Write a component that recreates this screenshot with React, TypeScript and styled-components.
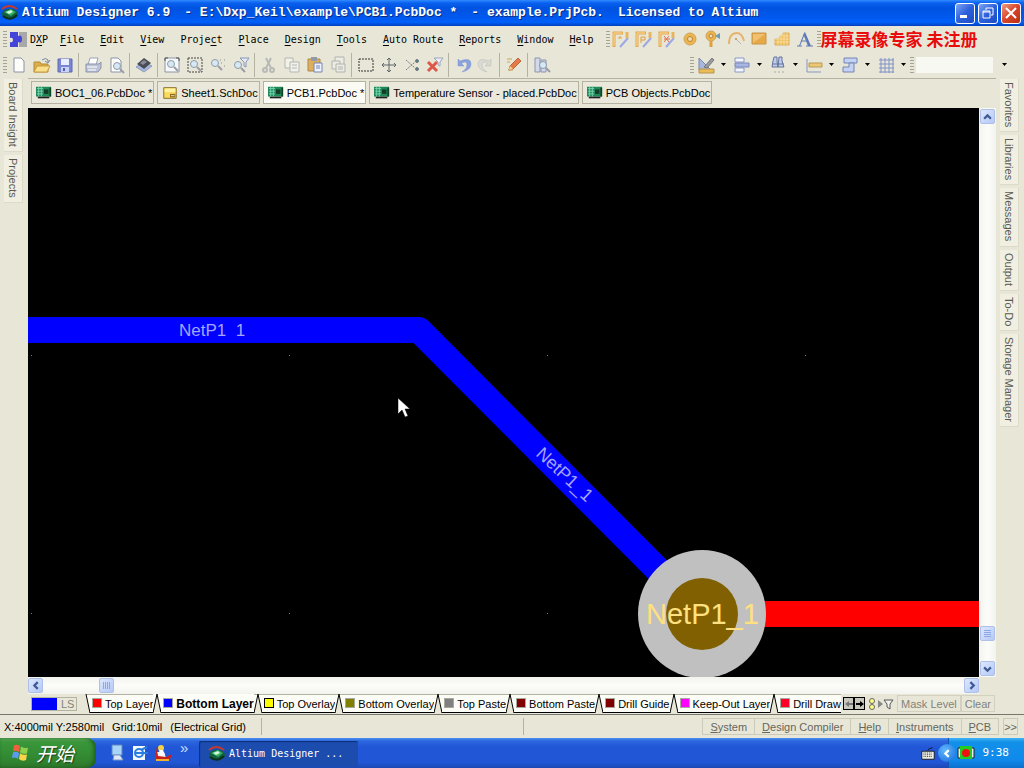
import React from 'react';
import styled, { createGlobalStyle } from 'styled-components';

const FACE = '#e8e7d7';
const EDGE = '#b4b3a2';

const GlobalStyle = createGlobalStyle`
  * { box-sizing: border-box; }
  body { margin: 0; background: ${FACE}; }
  button, select { font: inherit; color: inherit; border: 0; background: none; padding: 0; margin: 0; border-radius: 0; }
  svg { display: block; flex: none; }
`;

const Screen = styled.div`
  display: flex;
  flex-direction: column;
  height: 100vh;
  overflow: hidden;
  background: ${FACE};
  color: #000;
  font-family: 'Liberation Sans', sans-serif;
  font-size: 11px;
  line-height: 14px;
  white-space: nowrap;
`;

/* ---------- title bar ---------- */
const TitleBar = styled.header`
  display: flex;
  align-items: center;
  height: 26px;
  flex: none;
  padding: 0 3px 0 1px;
  background: linear-gradient(#2f8bff 0, #0a60ee 3px, #0053e0 8px, #0059f0 18px, #0062fb 22px, #0040c0 26px);
`;
const TitleText = styled.h1`
  display: flex;
  flex: 1;
  gap: 14px;
  margin: 0 0 0 3px;
  color: #fff;
  font: bold 13px/18px 'Liberation Mono', monospace;
  text-shadow: 1px 1px 0 #0a2a80;
`;
const WindowButtons = styled.div`
  display: flex;
  gap: 3px;
`;
const WindowButton = styled.button<{ $close?: boolean }>`
  display: grid;
  place-items: center;
  width: 20px;
  height: 21px;
  border: 1px solid #fff;
  border-radius: 3px;
  background: ${p => (p.$close ? 'linear-gradient(135deg, #f09a80, #d8452a 50%, #b83015)' : 'linear-gradient(135deg, #7ea5f5, #2c60dc 50%, #1c4cc4)')};
`;

/* ---------- menus and toolbars ---------- */
const BarRow = styled.div`
  display: flex;
  align-items: center;
  height: 26px;
  flex: none;
  padding-left: 3px;
`;
const Grip = styled.span`
  width: 4px;
  height: 16px;
  flex: none;
  background: repeating-linear-gradient(#a5a494 0 1px, transparent 1px 3px);
`;
const MenuNav = styled.nav`
  display: flex;
  align-items: center;
  margin-right: 4px;
  font: 10px/18px 'DejaVu Sans Mono', monospace;
`;
const MenuButton = styled.button`
  padding: 1px 8px 0;
  u { text-underline-offset: 2px; }
`;
const DxpButton = styled(MenuButton)`
  display: flex;
  align-items: center;
  gap: 3px;
  padding: 1px 4px 0 2px;
`;
const ToolGroup = styled.div`
  display: flex;
  align-items: center;
`;
const LeadGroup = styled(ToolGroup)`
  margin-right: 137px;
`;
const ToolButton = styled.button<{ $faded?: boolean }>`
  display: grid;
  place-items: center;
  width: 23px;
  height: 22px;
  opacity: ${p => (p.$faded ? 0.45 : 1)};
`;
const DropButton = styled.button`
  display: flex;
  align-items: center;
  width: 36px;
  height: 22px;
  padding-left: 3px;
  gap: 5px;
`;
const Separator = styled.span`
  width: 1px;
  height: 24px;
  margin: 0 2px;
  background: ${EDGE};
`;
const Combo = styled.label`
  display: flex;
  align-items: center;
  gap: 8px;
  margin-left: 2px;
  select { appearance: none; width: 77px; height: 16px; background: #f8f8f2; }
`;
const Watermark = styled.strong`
  color: #e80c0c;
  font: bold 17px/24px 'Noto Sans CJK SC', sans-serif;
`;

/* ---------- work area ---------- */
const WorkArea = styled.div`
  display: flex;
  flex: 1;
  min-height: 0;
`;
const SideRail = styled.aside`
  display: flex;
  flex-direction: column;
  align-items: flex-start;
  gap: 3px;
  width: 28px;
  flex: none;
  padding: 1px 0 0 4px;
`;
const SideTab = styled.button`
  writing-mode: vertical-rl;
  width: 19px;
  padding: 3px 0 4px;
  color: #59594f;
  text-align: left;
  line-height: 18px;
  background: #f0efe2;
  border-right: 1px solid #dcdbca;
  border-bottom: 1px solid #dcdbca;
`;
const Center = styled.main`
  display: flex;
  flex-direction: column;
  flex: 1;
  min-width: 0;
  border-top: 1px solid ${EDGE};
`;
const DocTabs = styled.div`
  display: flex;
  align-items: center;
  gap: 3px;
  height: 29px;
  flex: none;
  padding: 0 0 2px 3px;
`;
const DocTab = styled.button<{ $active?: boolean }>`
  display: flex;
  align-items: center;
  gap: 3px;
  height: 23px;
  padding: 0 1px 0 4px;
  border: 1px solid ${EDGE};
  background: ${p => (p.$active ? '#fbfbf4' : '#e9e8da')};
`;
const ViewRow = styled.div`
  display: flex;
  flex: 1;
  min-height: 0;
`;
const Board = styled.svg`
  flex: 1;
  min-width: 0;
  width: 100%;
  height: 100%;
  background: #000;
  font-family: 'Liberation Sans', sans-serif;
`;
const VScroll = styled.div`
  display: flex;
  flex-direction: column;
  align-items: center;
  justify-content: space-between;
  width: 17px;
  flex: none;
  padding: 1px 0;
  background: linear-gradient(90deg, #f3f3ee, #fcfcfa 50%, #f3f3ee);
`;
const HScroll = styled.div`
  display: flex;
  align-items: center;
  justify-content: space-between;
  height: 17px;
  flex: none;
  margin-right: 17px;
  background: linear-gradient(#f3f3ee, #fcfcfa 50%, #f3f3ee);
`;
const ScrollButton = styled.button`
  display: grid;
  place-items: center;
  width: 15px;
  height: 15px;
  border: 1px solid #aebfe8;
  border-radius: 2px;
  background: linear-gradient(135deg, #dde7fe, #b5c9f6);
`;
const ScrollEnd = styled.div<{ $row?: boolean; $gap: number }>`
  display: flex;
  flex-direction: ${p => (p.$row ? 'row' : 'column')};
  gap: ${p => p.$gap}px;
`;

/* ---------- layer strip ---------- */
const LayerBar = styled.div`
  display: flex;
  height: 20px;
  flex: none;
  padding: 0 1px 0 3px;
`;
const LayerSet = styled.button`
  display: flex;
  width: 46px;
  height: 14px;
  margin: 3px 5px 0 0;
  border: 1px solid ${EDGE};
  color: #85847a;
  line-height: 13px;
`;
const LayerColor = styled.span`
  width: 25px;
  height: 12px;
  margin-right: 4px;
  background: #00f;
`;
const LayerTabs = styled.div`
  display: flex;
  flex: 1;
  min-width: 0;
  overflow: hidden;
`;
const LayerTab = styled.button<{ $active?: boolean }>`
  display: flex;
  align-items: center;
  flex: none;
  height: 19px;
  background: #fdfdf8;
  border-top: 1px solid ${p => (p.$active ? '#fdfdf8' : EDGE)};
  border-bottom: 1px solid #000;
  font-size: ${p => (p.$active ? '12px' : '11px')};
  font-weight: ${p => (p.$active ? 'bold' : 'normal')};
`;
const Swatch = styled.span<{ $color: string; $outlined?: boolean }>`
  width: 10px;
  height: 10px;
  margin: 0 3px 2px 2px;
  background: ${p => p.$color};
  border: 1px solid ${p => (p.$outlined ? '#000' : '#a8a89c')};
`;
const Stepper = styled.button`
  display: grid;
  place-items: center;
  width: 11px;
  height: 13px;
  margin-top: 3px;
  border: 1px solid #000;
  background: #c9c8bc;
`;
const LayerTools = styled.div`
  display: flex;
  align-items: center;
  height: 17px;
  margin: 1px 0 0 3px;
  color: #83827a;
`;
const FlatButton = styled.button`
  height: 17px;
  padding: 0 3px;
  border: 1px solid #d2d1c0;
`;

/* ---------- status bar ---------- */
const StatusBar = styled.footer`
  display: flex;
  align-items: center;
  height: 24px;
  flex: none;
  padding: 0 6px 0 4px;
  border-top: 1px solid #77776c;
`;
const Coordinates = styled.div`
  display: flex;
  align-items: center;
  gap: 8px;
  width: 258px;
  height: 17px;
  border-right: 1px solid ${EDGE};
`;
const Message = styled.div`
  width: 262px;
  height: 17px;
  border-right: 1px solid ${EDGE};
`;
const PanelButtons = styled.div`
  display: flex;
  margin-left: auto;
  color: #66665c;
`;
const PanelButton = styled.button`
  height: 17px;
  padding: 0 7px;
  border: 1px solid #cccbb9;
  border-left-width: 0;
  &:first-child { border-left-width: 1px; }
`;
const MoreButton = styled.button`
  height: 17px;
  margin-left: 4px;
  border: 1px solid #cccbb9;
`;

/* ---------- task bar ---------- */
const TaskBar = styled.div`
  display: flex;
  height: 30px;
  flex: none;
  color: #fff;
  background: linear-gradient(#4a90f0 0, #2c66dd 3px, #2157d7 9px, #2157d7 24px, #1c48b4 30px);
`;
const StartButton = styled.button`
  display: flex;
  align-items: center;
  gap: 7px;
  width: 96px;
  padding-left: 11px;
  border-radius: 0 9px 9px 0;
  background: linear-gradient(#6dbb6a 0, #3a973a 4px, #338a33 18px, #2f7a2d 30px);
  box-shadow: inset -2px 0 4px #1c5a1c;
  font: italic 19px/26px 'Noto Sans CJK SC', sans-serif;
  text-shadow: 1px 1px 1px #1a401a;
`;
const QuickLaunch = styled.div`
  display: flex;
  align-items: center;
  gap: 5px;
  width: 103px;
  padding-left: 12px;
`;
const QuickButton = styled.button`
  width: 18px;
  height: 18px;
`;
const Chevron = styled.span`
  align-self: flex-start;
  margin-left: 3px;
  font-size: 15px;
  line-height: 20px;
  color: #cfe0ff;
`;
const TaskButton = styled.button`
  display: flex;
  align-items: center;
  gap: 3px;
  width: 159px;
  height: 26px;
  margin-top: 3px;
  padding-left: 9px;
  border-radius: 2px;
  background: #1b4cae;
  box-shadow: inset 1px 1px 1px #0f3078;
  font: 10px/18px 'DejaVu Sans Mono', monospace;
`;
const KeyboardButton = styled.button`
  display: grid;
  place-items: center;
  width: 16px;
  margin-left: auto;
`;
const Tray = styled.div`
  display: flex;
  align-items: center;
  margin-left: 12px;
  padding-right: 15px;
  background: linear-gradient(#3fb4f5 0, #1290e8 4px, #0f8aec 22px, #0c70cc 30px);
  box-shadow: inset 1px 0 0 #0d55b0;
  font: 11px/18px 'DejaVu Sans Mono', monospace;
`;
const TrayArrow = styled.button`
  display: grid;
  place-items: center;
  width: 18px;
  height: 18px;
  margin: 0 1px 0 -10px;
  border-radius: 50%;
  background: radial-gradient(circle at 40% 35%, #60b8ff, #1268d8);
`;
const Clock = styled.time`
  margin-left: 8px;
`;

/* ---------- drawings ---------- */
const sheet = <path d="M4 2h7l3 3v11H4z" fill="#fdfdfb" stroke="#8b93a8" />;
const lens = (x: number, y: number) => (
  <g>
    <circle cx={x} cy={y} r="3.5" fill="#d6e8f4" stroke="#8f9aa8" />
    <path d={`M${x + 3} ${y + 3}l4 4`} stroke="#9a9ca6" strokeWidth="2" />
  </g>
);
const track = (mark: React.ReactNode) => (
  <g>
    <path d="M2 17V3h9" fill="none" stroke="#e3a850" strokeWidth="3" />
    <path d="M2 16V3h8" fill="none" stroke="#fbdc98" />
    <path d="M8 17L16 8" stroke="#9ca8e4" strokeWidth="2" />
    <path d="M15 8V2" stroke="#e8b460" strokeWidth="3" />
    {mark}
  </g>
);

const art: Record<string, React.ReactNode> = {
  new: sheet,
  open: <g><path d="M1 6h6l1 2h7v8H1z" fill="#dcae48" stroke="#b58a35" /><path d="M4 10h13l-3 6H1z" fill="#fbe08c" stroke="#c79a40" /><path d="M9 4q4-3 6 0v2m-3-1l3 2 2-3" fill="none" stroke="#77869e" /></g>,
  save: <g><path d="M2 3h14v13H2z" fill="#7886d4" stroke="#5c68b0" /><path d="M5 3h8v6H5z" fill="#e8edff" /><path d="M5 11h8v5H5z" fill="#c9d1f4" /><path d="M7 12h2v3H7z" fill="#5460ac" /></g>,
  print: <g><path d="M6 2h8l-2 7H4z" fill="#fff" stroke="#9aa2b6" /><path d="M2 8h13l2-2v6l-3 4H2z" fill="#bcc3d6" stroke="#8a93ac" /><path d="M3 11h10M4 14h8" stroke="#fff" /></g>,
  preview: <g>{sheet}{lens(10, 10)}</g>,
  layers: <g><path d="M1 11l8-5 8 4-8 6z" fill="#a6b8dc" stroke="#8c9cbc" /><path d="M2 8l7-6 7 5-7 6z" fill="#4a4c54" /><path d="M5 7l4-3 3 2-4 3z" fill="#888b94" /></g>,
  fit: <g><path d="M2 2h14v14H2z" fill="#f6f8fa" stroke="#8c94a4" /><path d="M2 5V2h3M13 2h3v3" stroke="#555" fill="none" />{lens(8, 8)}</g>,
  area: <g><path d="M2 2h14v14H2z" fill="none" stroke="#444" strokeDasharray="2 1" />{lens(8, 8)}</g>,
  zoomSel: <g>{lens(6, 7)}<path d="M11 4h2m2 0h2M12 7h2m1 3h2" stroke="#8a8c8c" strokeDasharray="1 1" /></g>,
  zoomFilter: <g>{lens(6, 9)}<path d="M8 2h9l-3 4v5l-2-1V6z" fill="#e6ebf5" stroke="#8696b4" /></g>,
  cut: <g fill="none" stroke="#80848c" strokeWidth="2"><path d="M6 2l5 10M11 2L6 12" /><circle cx="5" cy="14" r="2" /><circle cx="12" cy="14" r="2" /></g>,
  copy: <g fill="#fff" stroke="#777d88"><path d="M2 2h8v10H2z" /><path d="M7 6h9v10H7zM9 9h5M9 12h5" /></g>,
  paste: <g><path d="M2 3h12v12H2z" fill="#dfb05c" stroke="#ac8848" /><path d="M5 1h6v4H5z" fill="#9299a8" /><path d="M8 7h8v9H8z" fill="#eef3ff" stroke="#7484b4" /><path d="M10 10h4M10 12h4" stroke="#7484b4" /></g>,
  stamp: <g fill="#f4f4f4" stroke="#6d7480"><path d="M6 1h9v8H6z" /><path d="M3 5h8v8H3z" /><path d="M7 8h9v8H7zM9 11h5M9 13h5" /></g>,
  select: <path d="M2 3h14v12H2z" fill="none" stroke="#333" strokeDasharray="2 1" />,
  move: <path d="M9 2v14M2 9h14M7 4l2-2 2 2M7 14l2 2 2-2M4 7L2 9l2 2M14 7l2 2-2 2" fill="none" stroke="#60646c" />,
  deselect: <g stroke="#707c84" fill="none"><path d="M3 4l9 8M3 14l9-8" strokeDasharray="2 1" /><circle cx="14" cy="5" r="1.5" fill="#557b88" /><circle cx="14" cy="13" r="1.5" fill="#557b88" /></g>,
  clear: <g><path d="M2 6l9 9M11 6l-9 9" stroke="#dc5848" strokeWidth="3" /><path d="M8 2h9l-3 4v4l-2-1V6z" fill="#eef1f8" stroke="#9aa4bc" /></g>,
  undo: <path d="M4 3v7h6L7.500 7.500Q13 4 13 9q0 4-5 7 9-2 9-8 0-7-11-3z" fill="#8ca2e0" stroke="#7c92cc" strokeWidth=".5" />,
  redo: <path d="M14 3v7H8l2.500-2.500Q5 4 5 9q0 4 5 7-9-2-9-8 0-7 11-3z" fill="#c9ccd2" stroke="#80848c" strokeWidth=".5" />,
  pencil: <g><path d="M2 3h5M2 6h3M3 14h5" stroke="#c8a850" /><path d="M4 14l1-4 8-8 3 3-8 8z" fill="#e47c48" stroke="#c06440" /><path d="M4 14l1-4 3 3z" fill="#f5d59c" /></g>,
  find: <g><path d="M2 2h5v14H2zM8 4h5v12H8z" fill="#d3d8ea" stroke="#8c94b0" />{lens(10, 9)}</g>,
  track1: track(<path d="M6 8h4M8 6v2" stroke="#e0a048" />),
  track2: track(<path d="M6 13V7h4v3H6" fill="none" stroke="#e09a38" />),
  track3: track(<path d="M6 6l5 6M11 6l-5 6M6 9h6" stroke="#e07050" />),
  pad: <g><circle cx="9" cy="9" r="6" fill="#edb64c" stroke="#d0a05a" /><circle cx="9" cy="9" r="2.500" fill="#f3ddb0" stroke="#b88438" /></g>,
  via: <g><circle cx="7" cy="6" r="5" fill="#edb64c" stroke="#d0a05a" /><circle cx="7" cy="6" r="2" fill="#f3ddb0" stroke="#b88438" /><path d="M7 11v6" stroke="#dea040" strokeWidth="3" /><path d="M11 6l5-3v6z" fill="#6f9cb0" /></g>,
  arc: <g><path d="M2 14Q2 3 10 3q5 0 7 8" fill="none" stroke="#e6b470" strokeWidth="2" /><path d="M9 9l5 5" stroke="#b6b4c0" /><circle cx="9" cy="9" r="1" fill="#c89040" /></g>,
  fill: <g><path d="M2 3h14v11H2z" fill="#e5a948" stroke="#c99448" /><path d="M3 13L15 4H3z" fill="#f0c070" /></g>,
  poly: <g><path d="M2 15V9h5V6h3V3h6v12z" fill="#ecbb58" stroke="#dcac5c" /><path d="M2 12h14M2 9h14M7 6h9M5 9v6M8 6v9M11 3v12M14 3v12" stroke="#f9dc98" /></g>,
  text: <g><path d="M3 16L8 3l1-1 6 14h-3L8 6 4 16z" fill="#6078b8" /><path d="M5 11h7M1 16h5M10 16h7" stroke="#6078b8" /></g>,
  util: <g><path d="M2 2v12h12z" fill="#a8b8dc" stroke="#7886b0" /><path d="M2 13h15v4H2z" fill="#e9bc58" stroke="#b89450" /><path d="M7 11L15 2l2 2-7 8z" fill="#9a9ca0" stroke="#76787c" /></g>,
  align: <g><path d="M2 2h9v4H2zM2 12h9v4H2z" fill="#f3f6ff" stroke="#8c98c4" /><path d="M2 7h14v4H2z" fill="#a8b6e4" stroke="#7888bc" /></g>,
  binoc: <g fill="#c0ccea" stroke="#64749c"><path d="M5 1h3v4l1 6H3l1-6zM10 1h3v4l2 6H9z" /><path d="M3 8h12" /><path d="M5 16h10" stroke="#aaa" strokeDasharray="2 2" /></g>,
  dim: <g><path d="M2 3v13h14" fill="none" stroke="#8896c0" /><path d="M4 7h13v4H4z" fill="#ecc874" stroke="#b99858" /></g>,
  room: <g fill="#c4d2f4" stroke="#7684b4"><path d="M3 2h13v5H3z" /><path d="M8 7h5v9H2v-5h6z" /></g>,
  grid: <path d="M4 2v15M8 2v15M12 2v15M16 2v15M2 4h15M2 8h15M2 12h15M2 16h15" stroke="#8090c8" />,
  pcb: <g><path d="M0 2h17v11H0z" fill="#1e8a58" /><path d="M2 14h13" stroke="#222" strokeWidth="2" /><path d="M1 4h7M1 7h7M1 10h7M3 2v11M6 2v11" stroke="#7cd4b4" /><path d="M9 5h5v5H9z" fill="#143c28" /><path d="M16 3v10" stroke="#104428" strokeWidth="2" /></g>,
  sch: <g><path d="M2 3h14v12H2z" fill="#fbd95c" stroke="#7c6420" /><path d="M3 4h12v4H3z" fill="#fff2a0" /><path d="M9 10h6v4H9z" fill="#8c6a28" /><path d="M10 12h4" stroke="#fbe9a0" /></g>,
  altium: <g><path d="M1 5q7-6 15 0" stroke="#c43a30" strokeWidth="2" fill="none" /><ellipse cx="9" cy="10" rx="8" ry="5" fill="#145f3c" /><path d="M3 8l7-3 5 3-5 4z" fill="#2fb060" /><path d="M5 8l5-2 2 2-4 2z" fill="#d4f4dc" /><path d="M2 12q7 6 14-1" stroke="#0b3020" strokeWidth="2" fill="none" /></g>,
  dxp: <g><path d="M10 1h8v15h-8z" fill="#a8a8a8" /><path d="M1 1h8v4q4-2 4 3t-4 3v5H1v-5q3 1 3-2T1 7z" fill="#4444d8" /></g>,
  desktop: <g><path d="M4 1h10v10H4z" fill="#a8d4fa" stroke="#5c86bc" /><path d="M6 11h6l3 5H5z" fill="#e0e8f4" stroke="#7898c8" /></g>,
  browser: <g><path d="M2 2h12v14H2z" fill="#f4f8ff" /><circle cx="8" cy="9" r="4" fill="none" stroke="#2a7ce0" strokeWidth="2" /><path d="M4 9h9M10 6l6-3M13 9h4" stroke="#2a7ce0" strokeWidth="2" /></g>,
  media: <g><circle cx="7" cy="4" r="3" fill="#f6cf4c" /><path d="M3 8h7l2 6H4z" fill="#f4f4f4" /><path d="M2 3v12h14l2-5-6 3-8-1z" fill="#c8201c" /><path d="M5 6h4l2 5H6z" fill="#fff" /><path d="M2 16h13" stroke="#f0b030" strokeWidth="2" /></g>,
  windows: <g transform="skewY(8) translate(0 -1)"><path d="M3 2q3-2 6 0L8 8Q5 6 2 8z" fill="#f0603c" /><path d="M10 2q4 2 7 0l-1 6q-4 2-7 0z" fill="#8fd04c" /><path d="M2 9q3-2 6 0l-1 6q-3-2-6 0z" fill="#5a9cf4" /><path d="M9 9q4 2 7 0l-1 6q-4 2-7 0z" fill="#fbd44c" /></g>,
  keyboard: <g><path d="M2 7h14v9H2z" fill="#f0f0ea" stroke="#111" /><path d="M4 9h10M4 11h10M4 13h10" stroke="#222" strokeDasharray="1 1" /><path d="M9 6q0-2 5-3" stroke="#111" fill="none" /></g>,
  record: <g><path d="M1 4h16v10H1z" fill="#e8f0f0" stroke="#222" /><path d="M3 2h12v13H3z" fill="#22cc22" /><circle cx="9" cy="9" r="4" fill="#f01010" /></g>,
};

function Icon({ name, size = 18 }: { name: string; size?: number }) {
  return <svg width={size} height={size} viewBox="0 0 18 18" aria-hidden="true">{art[name]}</svg>;
}

function Caret() {
  return <svg width="7" height="4" viewBox="0 0 7 4" aria-hidden="true"><path d="M1 0h5L3.500 3z" fill="#000" /></svg>;
}

const arrows = { up: 'M1 6l3-3 3 3', down: 'M1 3l3 3 3-3', left: 'M6 1L3 4l3 3', right: 'M3 1l3 3-3 3' };
function Arrow({ to, color = '#3c5a94' }: { to: keyof typeof arrows; color?: string }) {
  return <svg width="9" height="9" viewBox="0 0 8 8" aria-hidden="true"><path d={arrows[to]} fill="none" stroke={color} strokeWidth="2" /></svg>;
}

function Mnemonic({ text }: { text: string }) {
  const at = text.indexOf('&');
  if (at < 0) return <>{text}</>;
  return <>{text.slice(0, at)}<u>{text[at + 1]}</u>{text.slice(at + 2)}</>;
}

function Joint({ first }: { first?: boolean }) {
  return (
    <svg width="8" height="19" viewBox="0 0 8 19" aria-hidden="true">
      <path d={first ? 'M0 0h4l4 19H0z' : 'M4 0L0 19h8L4 0z'} fill={FACE} />
      {!first && <path d="M4 0L0 19" stroke="#000" />}
      <path d="M4 0l4 19" stroke="#000" />
    </svg>
  );
}

const titleParts = ['Altium Designer 6.9', '- E:\\Dxp_Keil\\example\\PCB1.PcbDoc *', '- example.PrjPcb.', 'Licensed to Altium'];
const menus = ['&File', '&Edit', '&View', 'Proje&ct', '&Place', '&Design', '&Tools', '&Auto Route', '&Reports', '&Window', '&Help'];
const mainTools = [
  ['new', 'open', 'save'], ['print', 'preview'], ['layers'], ['fit', 'area', 'zoomSel', 'zoomFilter'],
  ['cut', 'copy', 'paste', 'stamp'], ['select', 'move', 'deselect', 'clear'], ['undo', 'redo'], ['pencil'], ['find'],
];
const disabledTools = ['cut', 'copy', 'stamp', 'redo'];
const wiringTools = ['track1', 'track2', 'track3', 'pad', 'via', 'arc', 'fill', 'poly', 'text'];
const utilityTools = ['util', 'align', 'binoc', 'dim', 'room', 'grid'];
const documents = [
  { icon: 'pcb', name: 'BOC1_06.PcbDoc *' },
  { icon: 'sch', name: 'Sheet1.SchDoc' },
  { icon: 'pcb', name: 'PCB1.PcbDoc *', active: true },
  { icon: 'pcb', name: 'Temperature Sensor - placed.PcbDoc' },
  { icon: 'pcb', name: 'PCB Objects.PcbDoc' },
];
const layers = [
  { name: 'Top Layer', color: '#f00' },
  { name: 'Bottom Layer', color: '#00f', active: true },
  { name: 'Top Overlay', color: '#ff0', outlined: true },
  { name: 'Bottom Overlay', color: '#808000' },
  { name: 'Top Paste', color: '#808080' },
  { name: 'Bottom Paste', color: '#800000' },
  { name: 'Drill Guide', color: '#800000' },
  { name: 'Keep-Out Layer', color: '#f0f' },
  { name: 'Drill Draw', color: '#ff002a' },
];

function BoardView() {
  return (
    <Board role="img" aria-label="PCB layout">
      <path d="M-20 222H391L674 506" fill="none" stroke="#00f" strokeWidth="26" strokeLinejoin="round" />
      <line x1="674" y1="506" x2="100%" y2="506" stroke="#f00" strokeWidth="26" />
      {[3, 261, 519, 777].map(x => [247, 505].map(y => (
        x === 777 && y === 505 ? null : <rect key={`${x}-${y}`} x={x} y={y} width="1" height="1" fill="#777" />
      )))}
      <circle cx="674" cy="506" r="64" fill="#c0c0c0" />
      <circle cx="674" cy="506" r="36" fill="#806000" />
      <text x="151" y="228" fontSize="17" fill="#a4a4ff">{'NetP1\u00a0\u00a01'}</text>
      <text transform="translate(507 347) rotate(43)" fontSize="18" fill="#a4a4ff">NetP1_1</text>
      <text x="618" y="516" fontSize="29" fill="#ffe080">NetP1_1</text>
      <path d="M370 290v16l4-4 3 7 3-1-3-7h5z" fill="#fff" stroke="#000" strokeWidth=".5" />
    </Board>
  );
}

export default function App() {
  return (
    <Screen>
      <GlobalStyle />
      <TitleBar>
        <Icon name="altium" />
        <TitleText>{titleParts.map(part => <span key={part}>{part}</span>)}</TitleText>
        <WindowButtons>
          <WindowButton aria-label="Minimize"><svg width="12" height="12"><path d="M1 8h7v3H1z" fill="#fff" /></svg></WindowButton>
          <WindowButton aria-label="Restore"><svg width="12" height="12"><path d="M4 3V1h7v7H9M1 4h7v7H1zM1 5h7" fill="none" stroke="#fff" /></svg></WindowButton>
          <WindowButton $close aria-label="Close"><svg width="14" height="14"><path d="M2 2l10 10M12 2L2 12" stroke="#fff" strokeWidth="2" /></svg></WindowButton>
        </WindowButtons>
      </TitleBar>

      <BarRow>
        <Grip />
        <MenuNav>
          <DxpButton><Icon name="dxp" /><span><Mnemonic text="D&XP" /></span></DxpButton>
          {menus.map(menu => <MenuButton key={menu}><Mnemonic text={menu} /></MenuButton>)}
        </MenuNav>
        <Grip />
        <ToolGroup>
          {wiringTools.map(tool => <ToolButton key={tool} aria-label={tool}><Icon name={tool} /></ToolButton>)}
        </ToolGroup>
        <Grip />
        <Watermark>屏幕录像专家 未注册</Watermark>
      </BarRow>

      <BarRow>
        <Grip />
        <LeadGroup>
          {mainTools.map((group, index) => (
            <React.Fragment key={group[0]}>
              {index > 0 && <Separator />}
              {group.map(tool => (
                <ToolButton key={tool} aria-label={tool} $faded={disabledTools.includes(tool)}><Icon name={tool} /></ToolButton>
              ))}
            </React.Fragment>
          ))}
        </LeadGroup>
        <Grip />
        <ToolGroup>
          {utilityTools.map(tool => <DropButton key={tool} aria-label={tool}><Icon name={tool} /><Caret /></DropButton>)}
        </ToolGroup>
        <Grip />
        <Combo><select aria-label="Filter" /><Caret /></Combo>
      </BarRow>

      <WorkArea>
        <SideRail>
          {['Board Insight', 'Projects'].map(name => <SideTab key={name}>{name}</SideTab>)}
        </SideRail>
        <Center>
          <DocTabs>
            {documents.map(doc => (
              <DocTab key={doc.name} $active={doc.active}><Icon name={doc.icon} size={16} />{doc.name}</DocTab>
            ))}
          </DocTabs>
          <ViewRow>
            <BoardView />
            <VScroll>
              <ScrollButton aria-label="Scroll up"><Arrow to="up" /></ScrollButton>
              <ScrollEnd $gap={20}>
                <ScrollButton aria-label="Vertical thumb"><svg width="9" height="9"><path d="M1 1.500h7M1 3.500h7M1 5.500h7M1 7.500h7" stroke="#8ea8e4" /></svg></ScrollButton>
                <ScrollButton aria-label="Scroll down"><Arrow to="down" /></ScrollButton>
              </ScrollEnd>
            </VScroll>
          </ViewRow>
          <HScroll>
            <ScrollEnd $row $gap={56}>
              <ScrollButton aria-label="Scroll left"><Arrow to="left" /></ScrollButton>
              <ScrollButton aria-label="Horizontal thumb"><svg width="9" height="9"><path d="M1.500 1v7M3.500 1v7M5.500 1v7M7.500 1v7" stroke="#8ea8e4" /></svg></ScrollButton>
            </ScrollEnd>
            <ScrollButton aria-label="Scroll right"><Arrow to="right" /></ScrollButton>
          </HScroll>
          <LayerBar>
            <LayerSet><LayerColor />LS</LayerSet>
            <LayerTabs>
              {layers.map((layer, index) => (
                <LayerTab key={layer.name} $active={layer.active}>
                  <Joint first={index === 0} />
                  <Swatch $color={layer.color} $outlined={layer.outlined} />
                  {layer.name}
                </LayerTab>
              ))}
            </LayerTabs>
            <Stepper aria-label="Previous layers"><svg width="8" height="8"><path d="M0 4l4-3v2h4v2H4v2z" fill="#777" /></svg></Stepper>
            <Stepper aria-label="Next layers"><svg width="8" height="8"><path d="M8 4L4 1v2H0v2h4v2z" fill="#000" /></svg></Stepper>
            <LayerTools>
              <svg width="29" height="16" viewBox="0 0 29 16" aria-hidden="true">
                <circle cx="4" cy="5" r="2.500" fill="#ffff80" stroke="#666" /><circle cx="4" cy="11" r="2.500" fill="#ffff80" stroke="#666" />
                <path d="M10 4v8l5-4z" fill="#888" /><path d="M16 4h9l-3 4v5l-3-2V8z" fill="#f4f4ee" stroke="#555" />
              </svg>
              <FlatButton>Mask Level</FlatButton>
              <FlatButton>Clear</FlatButton>
            </LayerTools>
          </LayerBar>
        </Center>
        <SideRail>
          {['Favorites', 'Libraries', 'Messages', 'Output', 'To-Do', 'Storage Manager'].map(name => <SideTab key={name}>{name}</SideTab>)}
        </SideRail>
      </WorkArea>

      <StatusBar>
        <Coordinates><span>X:4000mil Y:2580mil</span><span>Grid:10mil</span><span>(Electrical Grid)</span></Coordinates>
        <Message />
        <PanelButtons>
          {['&System', '&Design Compiler', '&Help', '&Instruments', '&PCB'].map(name => (
            <PanelButton key={name}><Mnemonic text={name} /></PanelButton>
          ))}
          <MoreButton>&gt;&gt;</MoreButton>
        </PanelButtons>
      </StatusBar>

      <TaskBar>
        <StartButton><Icon name="windows" />开始</StartButton>
        <QuickLaunch>
          {['desktop', 'browser', 'media'].map(name => <QuickButton key={name} aria-label={name}><Icon name={name} /></QuickButton>)}
          <Chevron>»</Chevron>
        </QuickLaunch>
        <TaskButton><Icon name="altium" />Altium Designer ...</TaskButton>
        <KeyboardButton aria-label="Keyboard"><Icon name="keyboard" size={16} /></KeyboardButton>
        <Tray>
          <TrayArrow aria-label="Show hidden icons"><Arrow to="left" color="#fff" /></TrayArrow>
          <Icon name="record" />
          <Clock>9:38</Clock>
        </Tray>
      </TaskBar>
    </Screen>
  );
}
